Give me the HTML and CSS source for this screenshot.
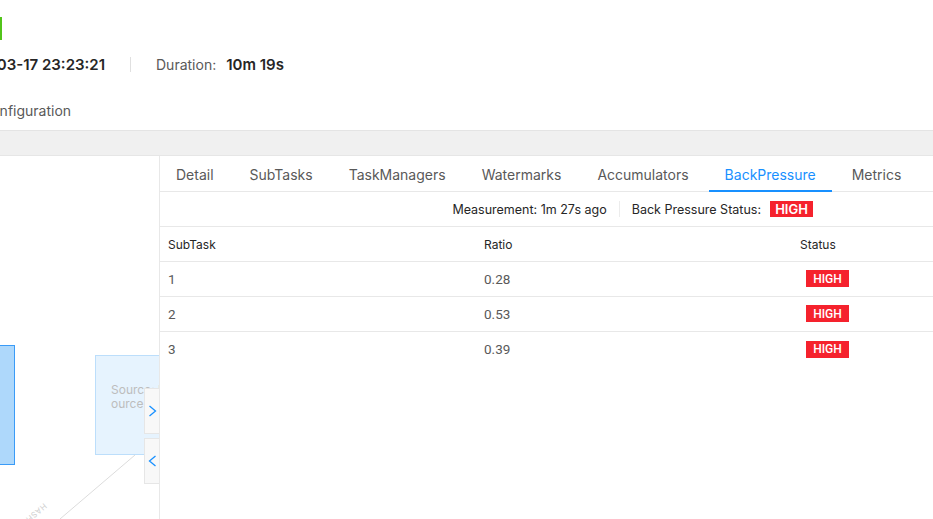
FILE: index.html
```html
<!DOCTYPE html>
<html lang="en">
<head>
<meta charset="utf-8">
<title>Job Detail - BackPressure</title>
<link rel="stylesheet" href="styles.css">
</head>
<body>
<div class="page">
  <header class="job-header">
    <div class="status-bar"></div>
    <div class="info-row">
      <span class="date-box"><span class="info-value">2021-03-17 23:23:21</span></span>
      <span class="info-divider"></span>
      <span class="info-label">Duration:</span>
      <span class="info-value">10m 19s</span>
    </div>
    <div class="config-row"><span class="config-tab">Configuration</span></div>
  </header>
  <div class="band"></div>
  <div class="main">
    <div class="canvas">
      <svg class="edges" width="159" height="363" viewBox="0 0 159 363">
        <line x1="135" y1="299" x2="60" y2="363" stroke="#dcdcdc" stroke-width="1"/>
      </svg>
      <div class="edge-label">HASH</div>
      <div class="node node-selected"></div>
      <div class="node node-source">
        <div class="node-text">Source: Events</div>
        <div class="node-text">ource</div>
      </div>
      <button class="side-btn side-btn-top" aria-label="expand">
        <svg width="9" height="12" viewBox="0 0 9 12"><polyline points="1.5,1 7.5,6 1.5,11" fill="none" stroke="#1890ff" stroke-width="1.3"/></svg>
      </button>
      <button class="side-btn side-btn-bottom" aria-label="collapse">
        <svg width="9" height="12" viewBox="0 0 9 12"><polyline points="7.5,1 1.5,6 7.5,11" fill="none" stroke="#1890ff" stroke-width="1.3"/></svg>
      </button>
    </div>
    <div class="panel">
      <nav class="tabs">
        <div class="tab">Detail</div>
        <div class="tab">SubTasks</div>
        <div class="tab">TaskManagers</div>
        <div class="tab">Watermarks</div>
        <div class="tab">Accumulators</div>
        <div class="tab active">BackPressure</div>
        <div class="tab">Metrics</div>
      </nav>
      <div class="measure">
        <span>Measurement: 1m 27s ago</span>
        <span class="measure-divider"></span>
        <span>Back Pressure Status:</span>
        <span class="badge badge-lg">HIGH</span>
      </div>
      <div class="table">
        <div class="tr th">
          <div class="cell">SubTask</div>
          <div class="cell">Ratio</div>
          <div class="cell">Status</div>
        </div>
        <div class="tr">
          <div class="cell">1</div>
          <div class="cell">0.28</div>
          <div class="cell"><span class="badge badge-sm">HIGH</span></div>
        </div>
        <div class="tr">
          <div class="cell">2</div>
          <div class="cell">0.53</div>
          <div class="cell"><span class="badge badge-sm">HIGH</span></div>
        </div>
        <div class="tr last">
          <div class="cell">3</div>
          <div class="cell">0.39</div>
          <div class="cell"><span class="badge badge-sm">HIGH</span></div>
        </div>
      </div>
    </div>
  </div>
</div>
</body>
</html>
```

FILE: styles.css
```css
* { box-sizing: border-box; }
html, body {
  margin: 0;
  padding: 0;
  background: #fff;
}
body {
  width: 933px;
  height: 519px;
  overflow: hidden;
  font-family: Inter, "Noto Sans", "Liberation Sans", sans-serif;
  color: #262626;
}
.page {
  display: flex;
  flex-direction: column;
  width: 933px;
  height: 519px;
}
.job-header {
  height: 130px;
  overflow: hidden;
}
.status-bar {
  margin-top: 17px;
  width: 2px;
  height: 23px;
  background: #52c41a;
}
.info-row {
  margin-top: 14px;
  height: 20px;
  display: flex;
  align-items: center;
  font-size: 14px;
  white-space: nowrap;
}
.date-box {
  width: 105px;
  flex: none;
  display: flex;
  justify-content: flex-end;
}
.info-value {
  font-size: 15px;
  font-weight: 600;
  color: #262626;
}
.info-divider {
  width: 1px;
  height: 15px;
  background: #e0e0e0;
  margin: 0 25px;
}
.info-label {
  color: #595959;
  margin-right: 10px;
}
.config-row {
  margin-top: 26px;
  height: 20px;
  display: flex;
  align-items: center;
  font-size: 14px;
  color: #595959;
  white-space: nowrap;
}
.config-tab {
  margin-left: -19px;
}
.band {
  height: 26px;
  background: #f0f0f0;
  border-top: 1px solid #e4e4e4;
  border-bottom: 1px solid #e6e6e6;
}
.main {
  flex: 1;
  display: flex;
  min-height: 0;
}
.canvas {
  width: 160px;
  flex: none;
  border-right: 1px solid #e8e8e8;
  position: relative;
  overflow: hidden;
}
.edges {
  position: absolute;
  left: 0;
  top: 0;
}
.edge-label {
  position: absolute;
  left: 24px;
  top: 352px;
  font-size: 8px;
  color: #cfcfcf;
  transform: rotate(140deg);
  letter-spacing: 0.5px;
}
.node {
  position: absolute;
}
.node-selected {
  left: -80px;
  top: 189px;
  width: 95px;
  height: 120px;
  background: #aed8fb;
  border: 1px solid #3a9bf7;
}
.node-source {
  left: 95px;
  top: 199px;
  width: 90px;
  height: 100px;
  background: #e6f3fe;
  border: 1px solid #bcdefb;
  padding: 27px 0 0 15px;
}
.node-text {
  font-size: 12px;
  line-height: 14px;
  color: #bdbdbd;
  white-space: nowrap;
}
.side-btn {
  position: absolute;
  left: 144px;
  width: 18px;
  height: 46px;
  padding: 0 0 0 3px;
  margin: 0;
  background: #f8f8f8;
  border: 1px solid #e6e6e6;
  display: flex;
  align-items: center;
  justify-content: flex-start;
}
.side-btn-top { top: 232px; }
.side-btn-bottom { top: 282px; }
.panel {
  flex: 1;
  min-width: 0;
}
.tabs {
  display: flex;
  height: 36px;
  border-bottom: 1px solid #e8e8e8;
  white-space: nowrap;
}
.tab {
  position: relative;
  padding: 2px 16px 0;
  margin-right: 4px;
  line-height: 33px;
  font-size: 14px;
  color: #595959;
}
.tab.active {
  color: #1890ff;
}
.tab.active::after {
  content: "";
  position: absolute;
  left: 0;
  right: 0;
  bottom: -1px;
  height: 2px;
  background: #1890ff;
}
.measure {
  height: 35px;
  border-bottom: 1px solid #e8e8e8;
  display: flex;
  align-items: center;
  justify-content: flex-end;
  padding-right: 120px;
  font-size: 12.5px;
  color: #262626;
  white-space: nowrap;
}
.measure-divider {
  width: 1px;
  height: 16px;
  background: #ececec;
  margin: 0 12px;
}
.badge {
  display: inline-flex;
  align-items: center;
  justify-content: center;
  width: 43px;
  background: #f5222d;
  color: #fff;
}
.badge-lg {
  height: 16px;
  margin-left: 9px;
  font-size: 13px;
  font-weight: 600;
}
.badge-sm {
  height: 17px;
  margin-left: 6px;
  font-family: Roboto, "Liberation Sans", sans-serif;
  font-size: 12px;
  font-weight: 500;
}
.table {
  padding-left: 8px;
}
.tr {
  display: grid;
  grid-template-columns: 316px 316px 316px;
  height: 35px;
  align-items: center;
  border-bottom: 1px solid #e8e8e8;
  margin-left: -8px;
  padding-left: 8px;
}
.tr.last {
  border-bottom: none;
}
.cell {
  font-family: Roboto, "Liberation Sans", sans-serif;
  font-size: 13.5px;
  color: #595959;
  white-space: nowrap;
  padding-bottom: 1px;
}
.th .cell {
  font-family: Inter, "Noto Sans", "Liberation Sans", sans-serif;
  font-size: 12px;
  color: #262626;
  padding-bottom: 0;
}
```
